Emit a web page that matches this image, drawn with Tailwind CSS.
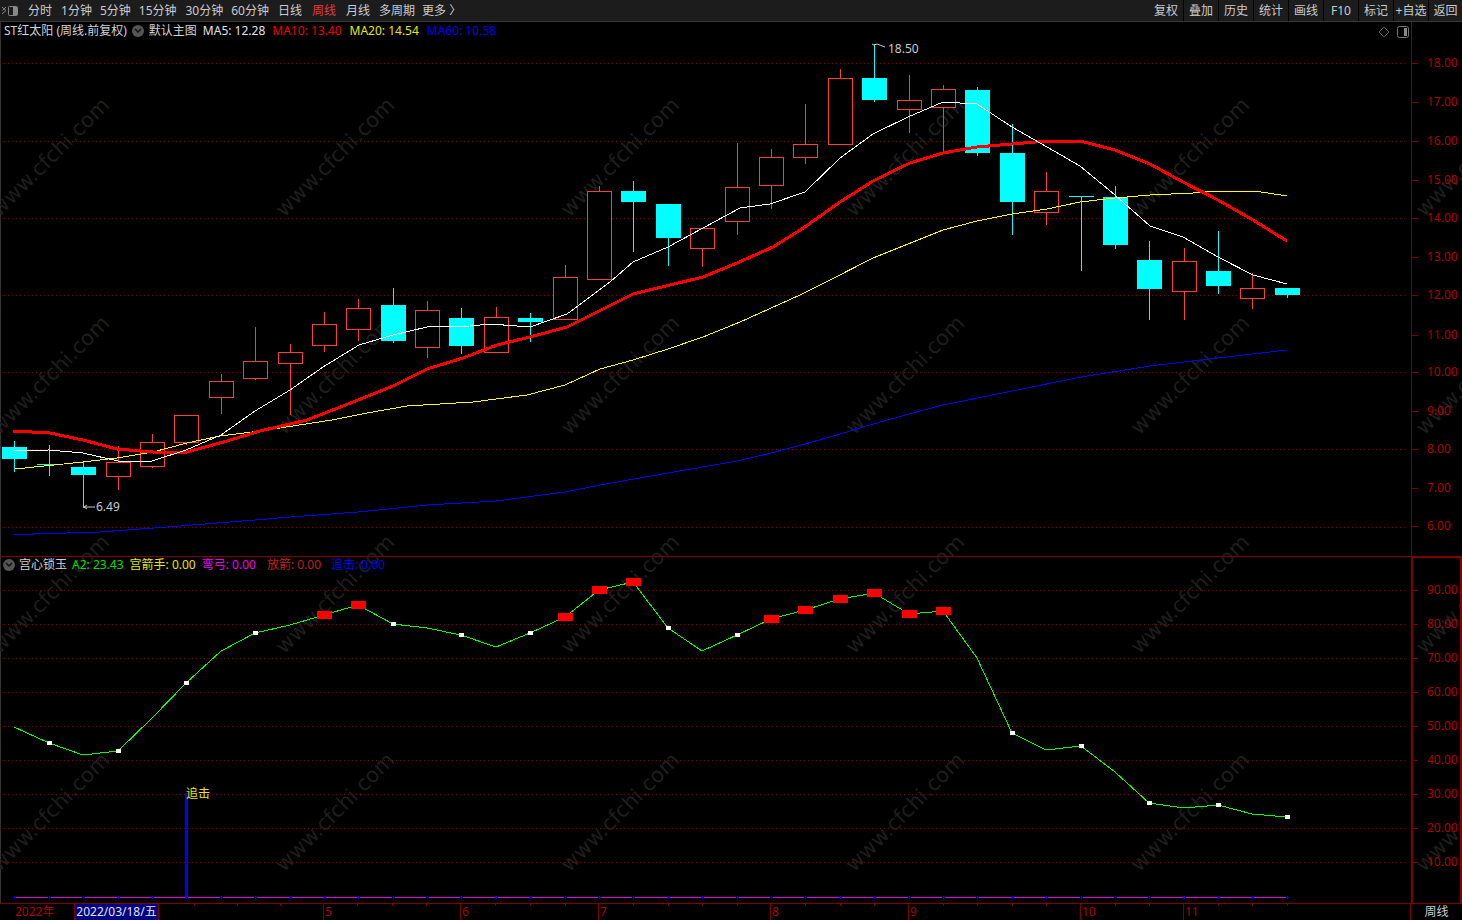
<!DOCTYPE html>
<html lang="zh-CN">
<head>
<meta charset="UTF-8">
<title>ST红太阳 周线</title>
<script src="https://cdn.jsdelivr.net/npm/@tailwindcss/browser@4"></script>
</head>
<body class="bg-black overflow-hidden font-['Noto_Sans','Noto_Sans_CJK_SC',sans-serif] text-[12px] leading-none">
<div class="w-[1462px] h-[920px] flex flex-col">

  <!-- top toolbar -->
  <div class="h-[22px] bg-[#1c1c1c] border-b border-[#3a3a3a] flex items-center text-[#c8ccd0] shrink-0">
    <svg width="18" height="12" viewBox="0 0 18 12" class="ml-[1px] mr-[9px]"><path d="M1 2l4 3.500-4 3.500M5 2L1.500 5.500" fill="none" stroke="#888"/><rect x="7.500" y="1.500" width="9" height="9" rx="1" fill="none" stroke="#888"/><rect x="12" y="2" width="4" height="8" fill="#888"/></svg>
    <div class="flex gap-[8px]">
      <span class="mr-[1px]">分时</span><span>1分钟</span><span>5分钟</span><span class="mr-[1px]">15分钟</span><span>30分钟</span><span class="mr-[1px]">60分钟</span><span class="mr-[2px]">日线</span><span class="text-[#e03c3c] mr-[2px]">周线</span><span class="mr-[1px]">月线</span><span class="mr-[-1px]">多周期</span><span>更多 〉</span>
    </div>
    <div class="ml-auto flex h-full gap-[1px] bg-black">
      <span class="w-[34px] bg-[#1c1c1c] flex items-center justify-center">复权</span>
      <span class="w-[34px] bg-[#1c1c1c] flex items-center justify-center">叠加</span>
      <span class="w-[34px] bg-[#1c1c1c] flex items-center justify-center">历史</span>
      <span class="w-[34px] bg-[#1c1c1c] flex items-center justify-center">统计</span>
      <span class="w-[34px] bg-[#1c1c1c] flex items-center justify-center">画线</span>
      <span class="w-[34px] bg-[#1c1c1c] flex items-center justify-center">F10</span>
      <span class="w-[34px] bg-[#1c1c1c] flex items-center justify-center">标记</span>
      <span class="w-[34px] bg-[#1c1c1c] flex items-center justify-center whitespace-nowrap">+自选</span>
      <span class="w-[33px] bg-[#1c1c1c] flex items-center justify-center">返回</span>
    </div>
  </div>

  <!-- main kline pane -->
  <div class="relative h-[534px] shrink-0 border-l border-[#333]">
    <svg id="main" class="absolute top-0 left-[-1px]" width="1462" height="534" viewBox="0 22 1462 534"></svg>
    <div class="absolute left-[3px] top-[2px] flex items-center h-[14px] whitespace-nowrap">
      <span class="text-[#d0d4d8]">ST红太阳 (周线.前复权)</span>
      <span class="ml-[5px] w-[12px] h-[12px] rounded-full bg-[#555] flex items-center justify-center"><svg width="8" height="6" viewBox="0 0 8 6"><path d="M1 1l3 3 3-3" fill="none" stroke="#111" stroke-width="1.500"/></svg></span>
      <span class="ml-[5px] text-[#d0d4d8]">默认主图</span>
      <span class="ml-[6px] text-[#e0e4e8]">MA5: 12.28</span>
      <span class="ml-[7px] text-[#f00000]">MA10: 13.40</span>
      <span class="ml-[8px] text-[#e8e800]">MA20: 14.54</span>
      <span class="ml-[8px] text-[#0000f0]">MA60: 10.58</span>
    </div>
    <div class="absolute left-[1377px] top-[4px] flex items-center gap-[7px]">
      <svg width="12" height="12" viewBox="0 0 12 12"><path d="M6 1l5 5-5 5-5-5z" fill="none" stroke="#666"/></svg>
      <svg width="12" height="12" viewBox="0 0 12 12"><rect x="0.500" y="0.500" width="11" height="11" rx="2" fill="none" stroke="#777"/><rect x="7" y="2" width="3" height="8" fill="#888"/></svg>
    </div>
    <div class="absolute left-[887px] top-[21px] text-[#c8ccd0]">18.50</div>
    <div class="absolute left-[95px] top-[479px] text-[#c8ccd0]">6.49</div>
  </div>

  <!-- indicator pane -->
  <div class="relative h-[347px] shrink-0 border-l border-[#333]">
    <svg id="sub" class="absolute top-0 left-[-1px]" width="1462" height="347" viewBox="0 556 1462 347"></svg>
    <div class="absolute left-[2px] top-[2px] flex items-center h-[14px] whitespace-nowrap">
      <span class="w-[12px] h-[12px] rounded-full bg-[#555] flex items-center justify-center"><svg width="8" height="6" viewBox="0 0 8 6"><path d="M1 1l3 3 3-3" fill="none" stroke="#111" stroke-width="1.500"/></svg></span>
      <span class="ml-[4px] text-[#d0d4d8]">宫心锁玉</span>
      <span class="ml-[5px] text-[#00e000]">A2: 23.43</span>
      <span class="ml-[6px] text-[#e8e800]">宫箭手: 0.00</span>
      <span class="ml-[6px] text-[#f000f0]">弯弓: 0.00</span>
      <span class="ml-[11px] text-[#c02020]">放箭: 0.00</span>
      <span class="ml-[10px] text-[#0000f0]">追击: 0.00</span>
    </div>
    <div class="absolute left-[185px] top-[232px] text-[#e8e800]">追击</div>
  </div>

  <!-- date axis -->
  <div class="flex-1 flex border-t border-[#800000] text-[#b00000] relative">
    <div id="dates" class="w-[1411px] border-r border-[#800000] relative">
      <span class="absolute left-[15px] top-[2px]">2022年</span>
      <span class="absolute left-[74px] top-0 h-[16px] w-[85px] bg-[#000080] border-x border-[#800000] text-[#e0e4f0] flex items-center justify-center whitespace-nowrap">2022/03/18/五</span>
      <span class="absolute left-[323px] top-0 h-[16px] border-l border-[#800000] pl-[1px] pt-[2px]">5</span>
      <span class="absolute left-[460px] top-0 h-[16px] border-l border-[#800000] pl-[1px] pt-[2px]">6</span>
      <span class="absolute left-[598px] top-0 h-[16px] border-l border-[#800000] pl-[1px] pt-[2px]">7</span>
      <span class="absolute left-[770px] top-0 h-[16px] border-l border-[#800000] pl-[1px] pt-[2px]">8</span>
      <span class="absolute left-[908px] top-0 h-[16px] border-l border-[#800000] pl-[1px] pt-[2px]">9</span>
      <span class="absolute left-[1080px] top-0 h-[16px] border-l border-[#800000] pl-[1px] pt-[2px]">10</span>
      <span class="absolute left-[1183px] top-0 h-[16px] border-l border-[#800000] pl-[1px] pt-[2px]">11</span>
    </div>
    <div class="flex-1 text-[#c8ccd0] flex items-center justify-center">周线</div>
  </div>
</div>

<script>
  const NS = "http://www.w3.org/2000/svg";
  const GRID = "#800000";
  const UP = "#ff3c3c";
  const DOWN = "#00ffff";
  const AXIS_FONT = "Noto Sans, sans-serif";

  const add = (svg, tag, attrs, text) => {
    const el = document.createElementNS(NS, tag);
    for (const k in attrs) el.setAttribute(k, attrs[k]);
    if (text) el.textContent = text;
    svg.appendChild(el);
    return el;
  };

  const line = (svg, x1, y1, x2, y2, color, extra) =>
    add(svg, "line", { x1, y1, x2, y2, stroke: color, "shape-rendering": "crispEdges", ...extra });

  const poly = (svg, pts, color, width) =>
    add(svg, "polyline", {
      points: pts.map(p => p.join(",")).join(" "),
      fill: "none", stroke: color, "stroke-width": width, "shape-rendering": "crispEdges",
    });

  const watermark = (svg) => {
    const ends = [110, 395, 680, 965, 1250, 1535];
    const rows = [100, 318, 537, 755];
    for (const ex of ends) for (const ey of rows) {
      const cx = ex - 55, cy = ey + 62;
      add(svg, "text", {
        x: cx, y: cy, fill: "#1e1e1e", "font-size": 21, "text-anchor": "middle",
        "font-family": "DejaVu Sans, sans-serif",
        transform: `rotate(-45 ${cx} ${cy})`,
      }, "www.cfchi.com");
    }
  };

  // x, wickTop, wickBottom, bodyTop, bodyBottom, up?
  const candles = [
    [14,441,472,447,459,0],[49,445,476,464,465,0],[83,462,508,467,475,0],[118,446,490,462,476,1],
    [152,434,468,442,466,1],[186,415,445,415,442,1],[221,374,414,381,397,1],[255,327,380,361,378,1],
    [290,344,415,352,363,1],[324,312,352,324,345,1],[358,299,341,308,329,1],[393,288,343,305,341,0],
    [427,301,358,310,347,1],[461,308,354,318,346,0],[496,307,353,317,352,1],[530,313,342,318,322,0],
    [565,265,319,277,319,1],[599,186,279,191,279,1],[633,181,252,191,202,0],[668,204,266,204,238,0],
    [702,228,267,228,248,1],[737,143,235,187,221,1],[771,149,209,157,185,1],[805,104,164,144,157,1],
    [840,69,144,78,144,1],[874,44,102,78,100,0],[909,75,133,100,109,1],[943,85,152,89,107,1],
    [977,87,156,90,153,0],[1012,124,235,153,202,0],[1046,172,225,191,212,1],[1081,196,271,196,197,0],
    [1115,186,249,197,245,0],[1149,241,320,260,289,0],[1184,248,320,261,291,1],[1218,231,294,271,286,0],
    [1252,273,309,288,298,1],[1287,288,298,288,295,0],
  ];

  const ma5 = [[14,451],[49,450],[83,453],[118,461],[152,461],[186,450],[221,435],[255,411],[290,390],[323,367],[359,345],[393,335],[427,327],[470,326],[490,324],[530,327],[567,314],[610,282],[633,262],[668,247],[703,228],[740,208],[770,204],[805,192],[840,158],[873,134],[908,117],[943,102],[977,104],[1012,127],[1047,147],[1080,166],[1115,195],[1150,226],[1183,237],[1218,257],[1253,275],[1287,284]];
  const ma10 = [[13,431],[50,433],[83,440],[117,449],[153,452],[187,452],[227,441],[260,431],[307,420],[343,406],[393,386],[427,369],[463,358],[497,345],[530,337],[567,327],[633,294],[703,277],[737,263],[773,247],[805,227],[840,202],[873,181],[910,163],[943,153],[977,147],[1012,144],[1047,141],[1080,141],[1115,150],[1150,164],[1183,182],[1218,200],[1253,220],[1287,241]];
  const ma20 = [[15,469],[83,462],[117,458],[153,452],[187,443],[220,436],[260,431],[332,420],[367,413],[407,406],[440,404],[473,402],[527,395],[565,385],[600,369],[633,360],[668,349],[703,337],[740,322],[800,295],[830,280],[873,258],[943,230],[977,221],[1012,214],[1047,209],[1080,202],[1115,198],[1150,195],[1193,193],[1210,191],[1255,191],[1287,196]];
  const ma60 = [[14,534],[33,534],[100,532],[167,527],[255,520],[290,517],[358,512],[427,505],[496,501],[565,492],[600,485],[668,473],[737,461],[771,453],[805,444],[840,434],[873,424],[909,414],[943,405],[1012,391],[1081,377],[1150,366],[1218,358],[1287,350]];

  const a2 = [[14,727],[49,743],[83,755],[118,751],[152,718],[186,683],[221,651],[255,633],[290,625],[324,615],[358,605],[393,624],[427,628],[461,635],[496,647],[530,633],[565,617],[599,590],[633,582],[668,628],[702,651],[737,635],[771,619],[805,610],[840,599],[874,593],[909,614],[943,611],[977,658],[1012,733],[1046,750],[1081,746],[1115,772],[1149,803],[1184,808],[1218,805],[1252,814],[1287,817]];
  const whiteIdx = [1,3,5,7,11,13,15,19,21,29,31,33,35,37];
  const redIdx = [9,10,16,17,18,22,23,24,25,26,27];

  // main pane
  const main = document.getElementById("main");
  watermark(main);
  line(main, 1411.5, 22, 1411.5, 556, GRID);
  const gridDot = { "stroke-dasharray": "1 3", "stroke-width": 1 };
  [63, 141, 218, 295, 372, 449, 527].forEach(y => line(main, 0, y + .5, 1408, y + .5, GRID, gridDot));
  [[18,63],[17,102],[16,141],[15,180],[14,218],[13,257],[12,295],[11,335],[10,372],[9,411],[8,449],[7,488],[6,526]].forEach(([v, y]) => {
    line(main, 1412, y + .5, 1418, y + .5, GRID);
    add(main, "text", { x: 1427, y: y + 4, fill: "#b00000", "font-size": 12, "font-family": AXIS_FONT }, v.toFixed(2));
  });
  candles.forEach(([x, wt, wb, bt, bb, up]) => {
    const c = up ? UP : DOWN;
    line(main, x + .5, wt, x + .5, wb, c);
    if (up) add(main, "rect", { x: x - 11.5, y: bt + .5, width: 24, height: bb - bt, fill: "#000", stroke: c, "stroke-width": 1, "shape-rendering": "crispEdges" });
    else if (bb - bt < 2) line(main, x - 12, bt + .5, x + 13, bt + .5, c);
    else add(main, "rect", { x: x - 12, y: bt, width: 25, height: bb - bt, fill: c, "shape-rendering": "crispEdges" });
  });
  poly(main, ma60, "#0000ff", 1);
  poly(main, ma20, "#ffff00", 1);
  poly(main, ma10, "#ff0000", 3);
  poly(main, ma5, "#ffffff", 1);
  add(main, "path", { d: "M874 45l-2 -1m2 1l3 -1l8 3", fill: "none", stroke: "#c8ccd0" });
  add(main, "path", { d: "M84 507l3 -2m-3 2l3 2m-3 -2h11", fill: "none", stroke: "#c8ccd0" });

  // indicator pane
  const sub = document.getElementById("sub");
  watermark(sub);
  line(sub, 0, 556.5, 1462, 556.5, GRID);
  add(sub, "rect", { x: 1411, y: 556, width: 2, height: 347, fill: GRID });
  add(sub, "rect", { x: 1460, y: 556, width: 2, height: 347, fill: GRID });
  add(sub, "rect", { x: 1411, y: 556, width: 51, height: 2, fill: GRID });
  [[90,591],[80,625],[70,659],[60,693],[50,727],[40,761],[30,795],[20,829],[10,863]].forEach(([v, y]) => {
    line(sub, 0, y - .5, 1408, y - .5, GRID, gridDot);
    line(sub, 1413, y - .5, 1418, y - .5, GRID);
    add(sub, "text", { x: 1427, y: y + 3, fill: "#b00000", "font-size": 12, "font-family": AXIS_FONT }, v.toFixed(2));
  });
  poly(sub, a2, "#00ff00", 1);
  whiteIdx.forEach(i => add(sub, "rect", { x: a2[i][0] - 2, y: a2[i][1] - 2, width: 5, height: 4, fill: "#fff" }));
  redIdx.forEach(i => add(sub, "rect", { x: a2[i][0] - 7, y: a2[i][1] - 4, width: 15, height: 8, fill: "#ff0000" }));
  line(sub, 14, 897.5, 1287, 897.5, "#e000e0");
  candles.forEach(([x]) => {
    line(sub, x - 1, 897.5, x + 2, 897.5, "#0000ff");
    line(sub, x + .5, 896, x + .5, 899, "#0000ff");
  });
  add(sub, "rect", { x: 185, y: 793, width: 3, height: 105, fill: "#0000ff" });

  // short ticks along the date axis
  const dates = document.getElementById("dates");
  [194,237,280,357,392,426,495,530,565,633,668,702,737,805,840,874,943,977,1012,1046,1115,1149,1218,1252,1287].forEach(x => {
    const t = document.createElement("i");
    t.className = "absolute top-0 w-px h-[2px] bg-[#800000]";
    t.style.left = x + "px";
    dates.appendChild(t);
  });
</script>
</body>
</html>
